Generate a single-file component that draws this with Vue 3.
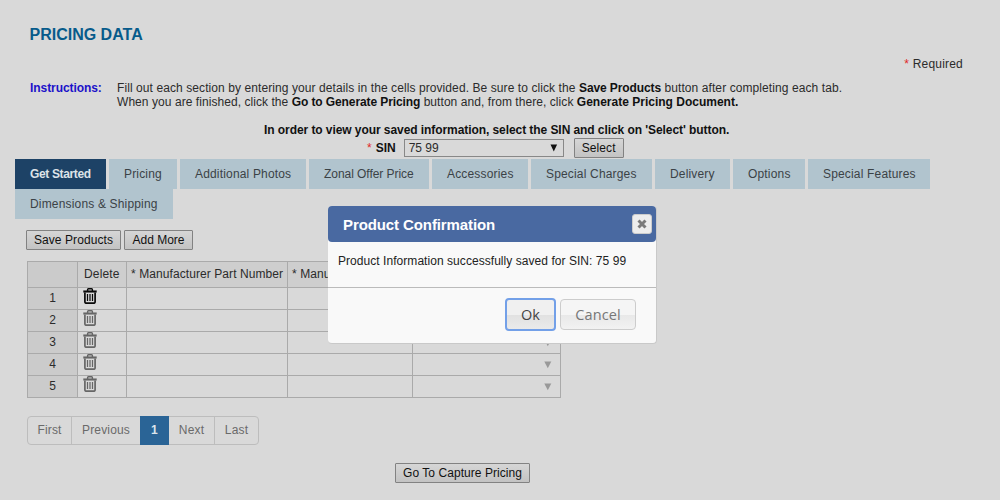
<script setup>
const tabs = [
  { name: 'Get Started', cls: 'active' },
  { name: 'Pricing', cls: 'wide' },
  { name: 'Additional Photos', cls: 'wide' },
  { name: 'Zonal Offer Price', cls: '' },
  { name: 'Accessories', cls: 'wide' },
  { name: 'Special Charges', cls: 'wide' },
  { name: 'Delivery', cls: 'wide' },
  { name: 'Options', cls: 'wide' },
  { name: 'Special Features', cls: 'wide' }
]
const rows = [1, 2, 3, 4, 5]
</script>

<template>
  <div class="page">
    <h1><span>PRICING DATA</span></h1>
    <div class="required"><i>*</i> <span>Required</span></div>
    <div class="instructions">
      <b class="label">Instructions:</b>
      <div>
        <p class="l1">Fill out each section by entering your details in the cells provided. Be sure to click the <b>Save Products</b> button after completing each tab.</p>
        <p class="l2">When you are finished, click the <b>Go to Generate Pricing</b> button and, from there, click <b class="doc">Generate Pricing Document.</b></p>
      </div>
    </div>
    <p class="hint">In order to view your saved information, select the SIN and click on 'Select' button.</p>
    <div class="sin">
      <i>*</i><b>SIN</b>
      <div class="select"><span>75 99</span><svg width="8" height="8" viewBox="0 0 8 8"><path d="M.5 .5h6.6L3.8 7.5z" /></svg></div>
      <button class="btn">Select</button>
    </div>
    <nav class="tabs">
      <a v-for="t in tabs" :key="t.name" :class="t.cls">{{ t.name }}</a>
    </nav>
    <nav class="tabs second"><a class="wide">Dimensions &amp; Shipping</a></nav>
    <div class="tools">
      <button class="btn save">Save Products</button>
      <button class="btn add">Add More</button>
    </div>
    <div class="table">
      <div class="row head">
        <span class="num"></span><span class="del">Delete</span><span class="mpn">* Manufacturer Part Number</span><span class="mn">* Manufacturer Name</span><span></span>
      </div>
      <div v-for="r in rows" :key="r" class="row">
        <span class="num">{{ r }}</span>
        <span class="trash">
          <svg :class="{ strong: r === 1 }" width="14" height="16" viewBox="0 0 14 16" fill="none" stroke="currentColor">
            <path d="M4.6 3V1.6Q4.6 .8 5.4 .8H8.6Q9.4 .8 9.4 1.6V3" stroke-width="1.4" />
            <path d="M.3 3.5H13.7" stroke-width="2.1" />
            <path d="M1.9 4.5V14Q1.9 15.2 3.2 15.2H10.8Q12.1 15.2 12.1 14V4.5" stroke-width="1.7" />
            <path d="M4.5 6V13M7 6V13M9.5 6V13" stroke-width="1.25" />
          </svg>
        </span>
        <span></span><span></span>
        <span class="drop"><svg width="8" height="8" viewBox="0 0 8 8"><path d="M.3 .5H7.3L3.8 7.3z" /></svg></span>
      </div>
    </div>
    <div class="pager">
      <a>First</a><a>Previous</a><a class="on">1</a><a>Next</a><a>Last</a>
    </div>
    <div class="foot"><button class="btn go">Go To Capture Pricing</button></div>

    <div class="modal">
      <header>
        <span>Product Confirmation</span>
        <button class="close"><svg width="10" height="10" viewBox="0 0 10 10"><path d="M1.5 1.5L8.5 8.5M8.5 1.5L1.5 8.5" stroke="#7b7b7b" stroke-width="3" /></svg></button>
      </header>
      <p><span>Product Information successfully saved for SIN: 75 99</span></p>
      <footer><button class="ok">Ok</button><button class="cancel">Cancel</button></footer>
    </div>
  </div>
</template>

<style>
body { background: #d9d9d9; overflow: hidden; }
</style>
<style scoped>
* { box-sizing: border-box; }
.page { position: relative; height: 500px; overflow: hidden; background: #d9d9d9; color: #2b2b2b; font: 12px/14px "Liberation Sans", Arial, sans-serif; }
p, h1 { margin: 0; white-space: nowrap; }
b { color: #111; }
i { color: #e02828; font-style: normal; }
h1 { padding: 25px 0 0 29.5px; font-size: 16px; line-height: 19px; color: #075b8b; }
.required { height: 14px; margin-top: 13px; padding-right: 37px; text-align: right; letter-spacing: .2px; }
.instructions { display: flex; height: 28px; margin-top: 10px; padding-left: 30px; }
.label { width: 87px; color: #1b12c9; letter-spacing: -.07px; }
.l1 { letter-spacing: .085px; }
.l2 { letter-spacing: .06px; }
.l1 b, .l2 b { letter-spacing: -.1px; }
.l2 .doc { letter-spacing: 0; }
.hint { margin-top: 14px; padding-left: 264px; font-weight: bold; color: #111; letter-spacing: -.07px; }
.sin { display: flex; align-items: center; height: 22px; padding-left: 367px; }
.sin b { width: 20px; margin-left: 4px; }
.select { display: flex; align-items: center; justify-content: space-between; width: 160px; height: 18px; margin-left: 8px; padding: 0 5px 0 4px; border: 1px solid #888; }
.select svg { fill: #111; }
.sin .btn { width: 50px; margin-left: 10px; letter-spacing: .1px; }
.btn { height: 20px; padding: 0; border: 1px solid #828282; border-radius: 1px; background: linear-gradient(#d6d6d6, #c3c3c3); color: #111; font: inherit; line-height: 16px; white-space: nowrap; }
.tabs { display: grid; grid-template-columns: 91px 68px 126px 120px 96px 121px 75px 72px 122px; gap: 3px; padding-left: 15px; }
.tabs a { height: 30px; padding-left: 15px; background: #b1c4ce; color: #3b4246; line-height: 30px; white-space: nowrap; letter-spacing: -.05px; }
.tabs .wide { letter-spacing: .17px; }
.tabs .active { background: #1d4266; color: #dde3e8; font-weight: bold; letter-spacing: -.36px; }
.second { grid-template-columns: 158px; }
.tools { display: flex; gap: 3px; margin-top: 11px; padding-left: 26px; }
.save { width: 95px; letter-spacing: .08px; }
.add { width: 69px; }
.table { width: 534px; margin: 11px 0 0 27px; border: solid #aaa; border-width: 1px 0 0 1px; }
.row { display: grid; grid-template-columns: 50px 49px 161px 125px 148px; height: 22px; }
.row > span { overflow: hidden; border: solid #aaa; border-width: 0 1px 1px 0; white-space: nowrap; line-height: 21px; }
.head { height: 26px; }
.head > span { padding-left: 4px; background: #cecece; line-height: 24px; letter-spacing: .08px; }
.head .del { padding-left: 6px; letter-spacing: .15px; }
.row .num { padding-left: 0; background: #cbcbcb; text-align: center; }
.trash { padding-left: 5px; color: #666; }
.trash svg { display: block; }
.trash .strong { color: #0a0a0a; }
.drop { display: flex; align-items: center; justify-content: flex-end; padding-right: 8px; }
.drop svg { fill: #999; }
.pager { display: grid; grid-template-columns: 44px 68px 29px 46px 43px; width: 232px; height: 29px; margin: 18px 0 0 27px; border: 1px solid #bdbdbd; border-radius: 4px; }
.pager a { height: 27px; border-right: 1px solid #bdbdbd; color: #6a6a6a; line-height: 27px; text-align: center; letter-spacing: .15px; }
.pager a:nth-child(2), .pager a:last-child { border: 0; }
.pager .on { height: 29px; margin-top: -1px; border: 0; background: #2a6496; color: #dce4eb; font-weight: bold; line-height: 29px; }
.foot { padding: 18px 0 0 395px; }
.go { width: 135px; letter-spacing: .05px; }
.modal { position: absolute; left: 328px; top: 206px; width: 329px; height: 138px; border: 1px solid #c9c9c9; border-width: 0 1px 1px 0; border-radius: 4px; background: #f9f9f9; color: #222; }
.modal header { display: flex; align-items: center; justify-content: space-between; height: 36px; padding: 0 4px 0 15px; border-radius: 4px; background: #4969a1; color: #fff; font-size: 15px; font-weight: bold; letter-spacing: -.1px; }
.modal header span { padding-top: 2px; }
.close { display: flex; align-items: center; justify-content: center; width: 20px; height: 20px; padding: 0; border: 1px solid #ccc; border-radius: 3px; background: #ededed; }
.modal p { height: 46px; padding: 12px 0 0 10px; border-bottom: 1px solid #bbb; letter-spacing: .05px; }
.modal footer { display: flex; gap: 4px; padding: 10px 0 0 177px; }
.modal footer button { width: 51px; height: 33px; padding: 0; border: 2px solid #73a0e8; border-radius: 4px; background: linear-gradient(#f0f0f0 0 50%, #e1e1e1 51%, #eaeaea); color: #444; font: 14.5px "Open Sans", sans-serif; }
.modal footer .cancel { width: 76px; height: 31px; margin-top: 1px; border: 1px solid #ccc; background: linear-gradient(#f5f5f5 0 50%, #e8e8e8 51%, #f2f2f2); color: #777; letter-spacing: .1px; }
</style>
